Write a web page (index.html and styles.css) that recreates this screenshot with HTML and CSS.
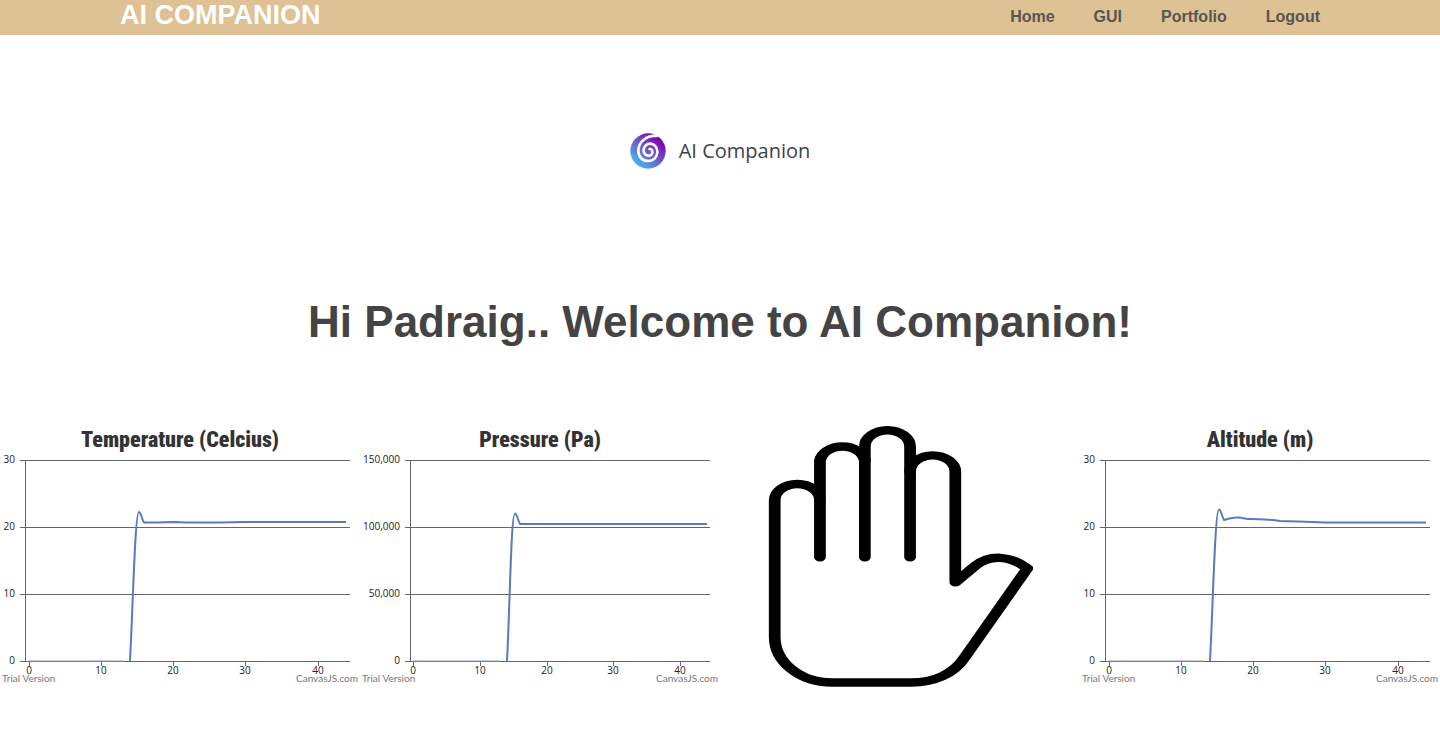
FILE: index.html
```html
<!DOCTYPE html>
<html lang="en">
<head>
<meta charset="utf-8">
<meta name="viewport" content="width=device-width, initial-scale=1">
<title>AI Companion</title>
<link rel="stylesheet" href="styles.css">
</head>
<body>
<header class="site-header">
  <div class="header-inner">
    <a class="brand" href="#">AI COMPANION</a>
    <nav class="nav" aria-label="Main">
      <a href="#">Home</a>
      <a href="#">GUI</a>
      <a href="#">Portfolio</a>
      <a href="#">Logout</a>
    </nav>
  </div>
</header>
<main>
  <div class="logo">
    <svg class="logo-mark" viewBox="29 39 106 108" aria-hidden="true">
      <defs>
        <linearGradient id="swirl" x1="0.15" y1="0.9" x2="0.8" y2="0.15">
          <stop offset="0" stop-color="#45bdf0"/>
          <stop offset="0.5" stop-color="#6a62cc"/>
          <stop offset="1" stop-color="#8400ae"/>
        </linearGradient>
      </defs>
      <circle cx="82" cy="93" r="53" fill="url(#swirl)"/>
      <path d="M108 48C80 44 53 65 53 92C53 111 66 123 82 123C99 123 110 111 110 96C110 81 100 71 88 71C76 71 69 81 69 91C69 101 76 107 84 107C92 107 97 100 95 93C94 88 90 86 87 87" fill="none" stroke="#fff" stroke-width="8" stroke-linecap="round"/>
    </svg>
    <span class="logo-text">AI Companion</span>
  </div>
  <h1 class="welcome">Hi Padraig.. Welcome to AI Companion!</h1>
  <section class="panels">
    <article class="chart">
      <h2 class="chart-title">Temperature (Celcius)</h2>
      <svg class="plot" viewBox="0 0 360 217" role="img" aria-label="Temperature over time">
        <path class="axis" d="M20 6.5H350M20 73.5H350M20 140.5H350M20 207.5H350M25.5 6V207M29.5 207V212M101.5 207V212M173.5 207V212M245.5 207V212M318.5 207V212"/>
        <path class="idle" d="M29 207H124"/>
        <path class="series" d="M130 207C133 150 135 58 139 58C141 58 142 66 144 68.500C160 69 165 68 175 68C190 69 220 68.500 245 68H346"/>
        <g class="y-labels"><text x="15" y="9">30</text><text x="15" y="76">20</text><text x="15" y="143">10</text><text x="15" y="210">0</text></g>
        <g class="x-labels"><text x="29" y="220">0</text><text x="101" y="220">10</text><text x="173" y="220">20</text><text x="245" y="220">30</text><text x="318" y="220">40</text></g>
      </svg>
      <div class="credits"><span>Trial Version</span><a href="#">CanvasJS.com</a></div>
    </article>
    <article class="chart">
      <h2 class="chart-title">Pressure (Pa)</h2>
      <svg class="plot" viewBox="0 0 360 217" role="img" aria-label="Pressure over time">
        <path class="axis" d="M45 6.5H350M45 73.5H350M45 140.5H350M45 207.5H350M50.500 6V207M53.500 207V212M120.500 207V212M187.500 207V212M253.500 207V212M320.500 207V212"/>
        <path class="idle" d="M53 207H140"/>
        <path class="series" d="M147 207C150 150 151 59.500 155 59.500C157 59.500 158 67 160 70H347"/>
        <g class="y-labels"><text x="40" y="9">150,000</text><text x="40" y="76">100,000</text><text x="40" y="143">50,000</text><text x="40" y="210">0</text></g>
        <g class="x-labels"><text x="53" y="220">0</text><text x="120" y="220">10</text><text x="187" y="220">20</text><text x="253" y="220">30</text><text x="320" y="220">40</text></g>
      </svg>
      <div class="credits"><span>Trial Version</span><a href="#">CanvasJS.com</a></div>
    </article>
    <div class="gesture">
      <svg class="hand" viewBox="50 33 795 780" role="img" aria-label="Open hand">
        <g transform="scale(1 .72)" fill="none" stroke="#000" stroke-width="35" stroke-linecap="round" stroke-linejoin="round">
          <path d="M208 590V190A67.500 67.500 0 0 1 342 190V590"/>
          <path d="M342 190V131A67.500 67.500 0 0 1 477 131V590"/>
          <path d="M477 235A67.500 67.500 0 0 1 612 235V694L670 627C715 577 775 582 827 636L640 1005C607 1075 548 1109 480 1109H245C145 1109 73 1020 73 920V354A67.500 67.500 0 0 1 208 354"/>
        </g>
      </svg>
    </div>
    <article class="chart">
      <h2 class="chart-title">Altitude (m)</h2>
      <svg class="plot" viewBox="0 0 360 217" role="img" aria-label="Altitude over time">
        <path class="axis" d="M20 6.5H350M20 73.5H350M20 140.5H350M20 207.5H350M25.5 6V207M29.5 207V212M101.5 207V212M173.5 207V212M245.5 207V212M318.5 207V212"/>
        <path class="idle" d="M29 207H124"/>
        <path class="series" d="M130 207C133 150 135 55.500 139 55.500C141 55.500 142 63 144 66C149 64 153 63 159 63.500C164 64 165 65 173 65C185 66 190 65 200 67C215 67 220 68 245 68.500H346"/>
        <g class="y-labels"><text x="15" y="9">30</text><text x="15" y="76">20</text><text x="15" y="143">10</text><text x="15" y="210">0</text></g>
        <g class="x-labels"><text x="29" y="220">0</text><text x="101" y="220">10</text><text x="173" y="220">20</text><text x="245" y="220">30</text><text x="318" y="220">40</text></g>
      </svg>
      <div class="credits"><span>Trial Version</span><a href="#">CanvasJS.com</a></div>
    </article>
  </section>
</main>
</body>
</html>
```
FILE: styles.css
```css
* {
  box-sizing: border-box;
}

body {
  margin: 0;
  background: #fff;
  color: #444;
  font-family: Arial, "Liberation Sans", sans-serif;
}

a {
  color: inherit;
  text-decoration: none;
}

.site-header {
  background: #dec194;
}

.header-inner {
  display: flex;
  align-items: center;
  justify-content: space-between;
  max-width: 1240px;
  margin: 0 auto;
  padding: 0 20px 4px;
}

.brand {
  color: #fff;
  font-size: 27px;
  font-weight: bold;
  line-height: 31px;
}

.nav {
  display: flex;
  gap: 39px;
  padding-top: 2px;
  color: #595550;
  font-size: 16px;
  font-weight: bold;
}

.logo {
  display: flex;
  align-items: center;
  justify-content: center;
  gap: 13px;
  padding: 98px 20px 0;
}

.logo-mark {
  width: 36px;
  height: 36px;
}

.logo-text {
  color: #3b4252;
  font-family: "Open Sans", sans-serif;
  font-size: 20px;
  font-weight: 500;
  line-height: 36px;
}

.welcome {
  margin: 124px 20px 0;
  font-size: 44px;
  line-height: 58px;
  text-align: center;
}

.panels {
  display: grid;
  grid-template-columns: repeat(4, 1fr);
  margin-top: 75px;
}

.chart-title {
  margin: 0;
  color: #333;
  font-family: Impact, "Roboto Condensed", "Open Sans Condensed", "Liberation Sans", sans-serif;
  font-size: 22px;
  font-weight: 900;
  line-height: 28px;
  text-align: center;
}

.plot {
  display: block;
  width: 100%;
  overflow: visible;
}

.axis {
  fill: none;
  stroke: #666;
}

.idle {
  fill: none;
  stroke: #8f9cc0;
}

.series {
  fill: none;
  stroke: #5b7abb;
  stroke-width: 2;
  stroke-linejoin: round;
}

.y-labels,
.x-labels {
  fill: #222;
  font-family: "Open Sans", sans-serif;
  font-size: 10px;
}

.y-labels {
  text-anchor: end;
}

.x-labels {
  text-anchor: middle;
}

.credits {
  display: flex;
  justify-content: space-between;
  padding: 0 2px;
  color: #777;
  font-family: Lato, sans-serif;
  font-size: 10px;
  line-height: 15px;
}

.gesture {
  display: flex;
  align-items: flex-start;
  justify-content: center;
}

.hand {
  width: 74%;
}
```
